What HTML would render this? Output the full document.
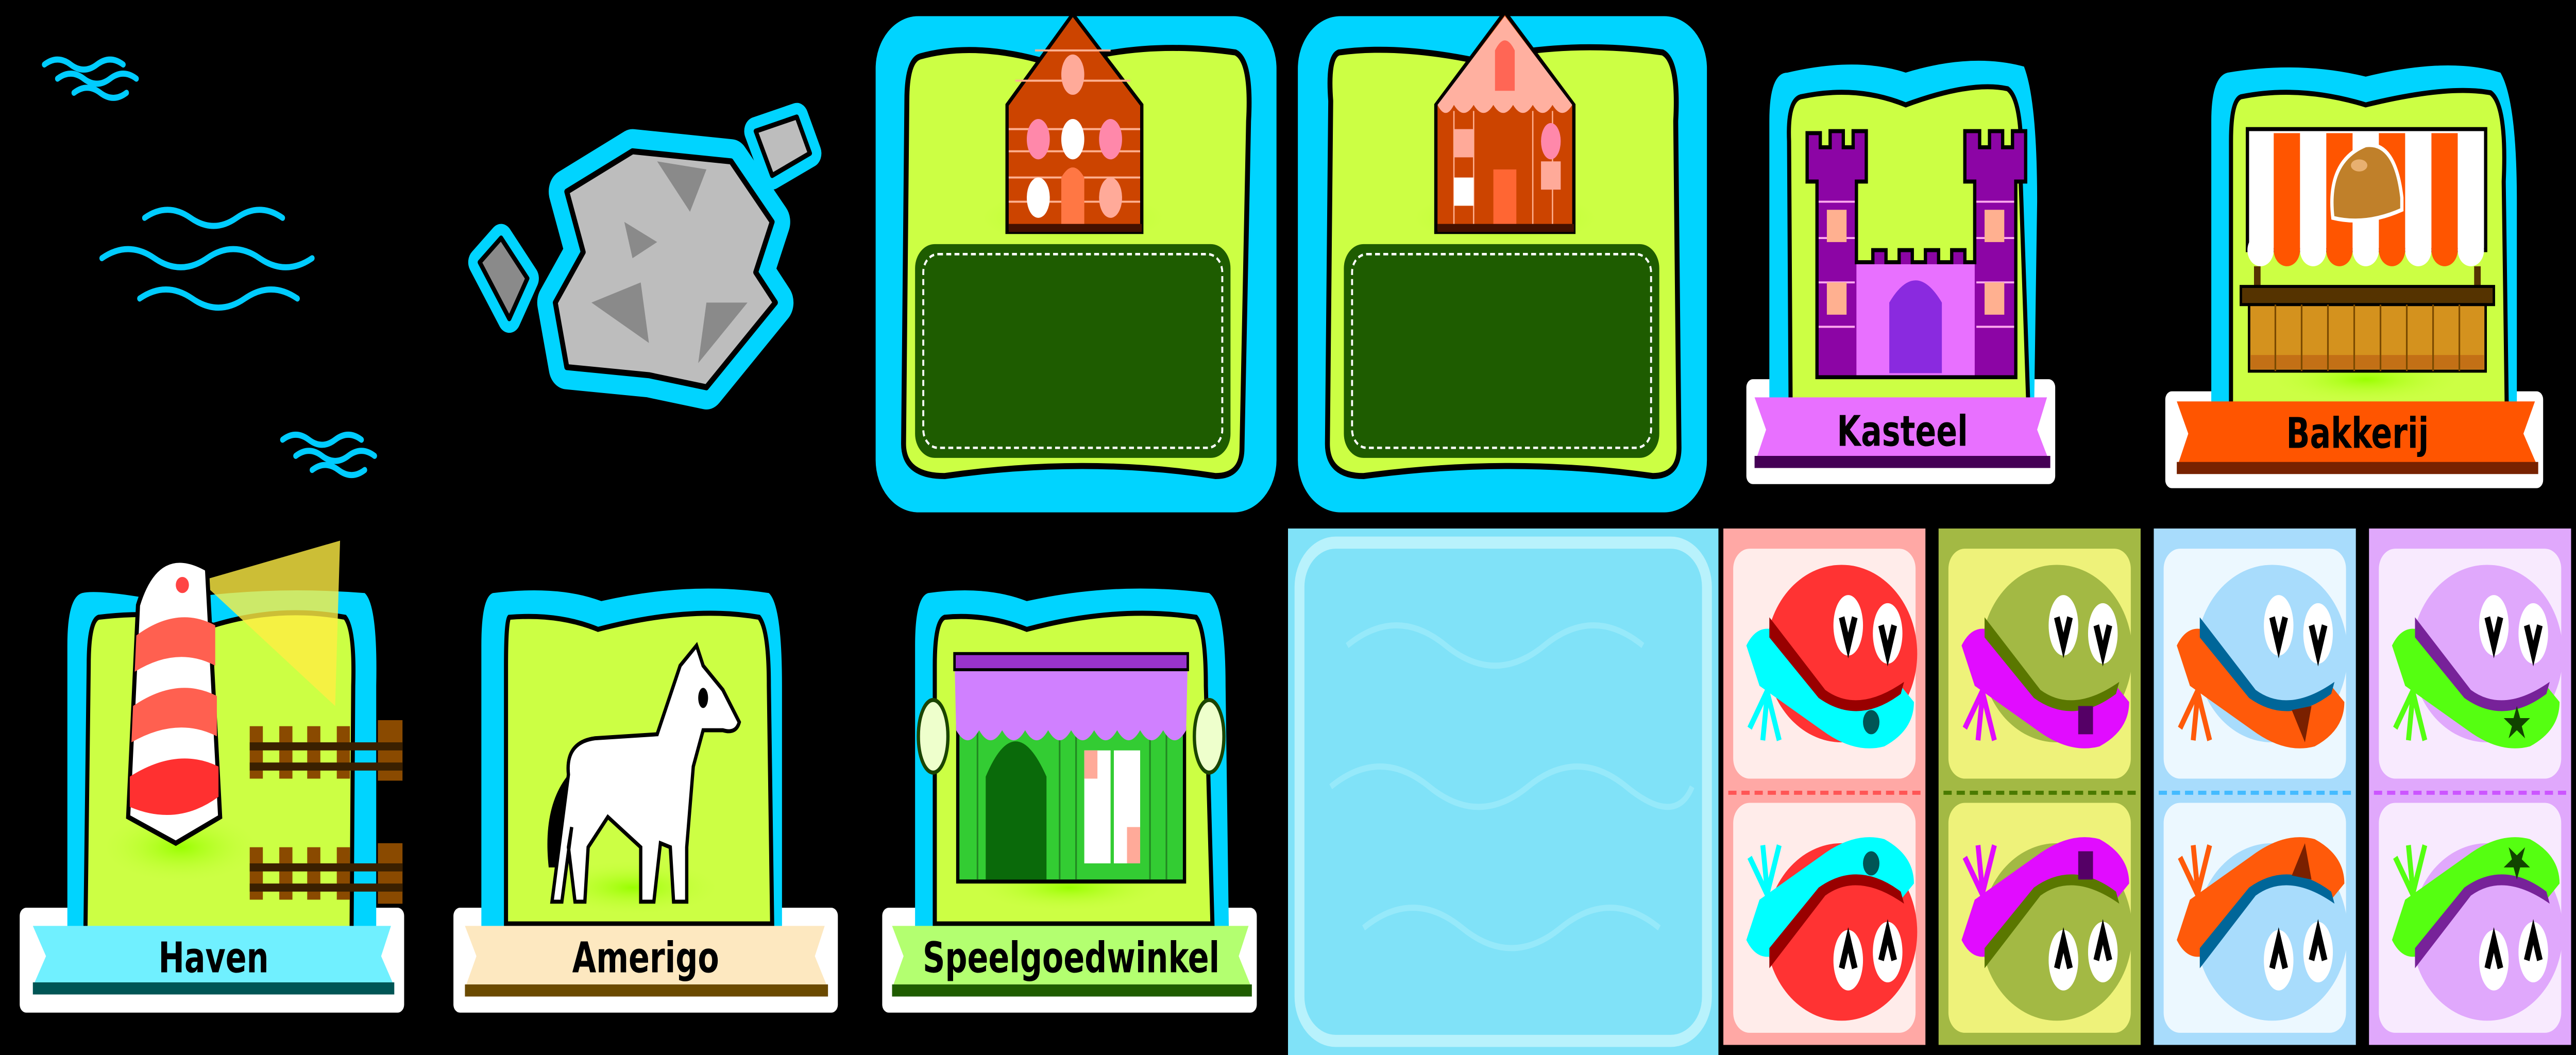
<!DOCTYPE html>
<html><head><meta charset="utf-8"><style>
html,body{margin:0;padding:0;background:#000;width:100vw;height:100vh;overflow:hidden;}
svg{display:block;width:100vw;height:100vh;}
text{font-family:"DejaVu Sans Condensed","DejaVu Sans","Liberation Sans",sans-serif;font-weight:bold;font-stretch:condensed;}
</style></head><body>
<svg viewBox="0 0 1568 523" preserveAspectRatio="none" xmlns="http://www.w3.org/2000/svg">
<rect width="1568" height="523" fill="#000"/>
<defs>
<radialGradient id="glow" cx="50%" cy="50%" r="50%"><stop offset="0" stop-color="#99ff00"/><stop offset="1" stop-color="#ccff44" stop-opacity="0"/></radialGradient>
</defs>

<g fill="none" stroke="#00ccff" stroke-width="3" stroke-linecap="round">
<path d="M27 32 q8-5 16 0 t16 0 t16 0"/><path d="M35 39 q8-5 16 0 t16 0 t16 0"/><path d="M45 46 q8-5 16 0 t16 0"/>
<path d="M62 128 q16-9 32 0 t32 0 t32 0 t32 0"/><path d="M88 108 q14-8 28 0 t28 0 t28 0"/><path d="M85 148 q16-9 32 0 t32 0 t32 0"/>
<path d="M172 218 q8-5 16 0 t16 0 t16 0"/><path d="M180 226 q8-5 16 0 t16 0 t16 0"/><path d="M190 233 q8-5 16 0 t16 0"/>
</g>

<g stroke-linejoin="round">
<path d="M345 95 L385 75 L445 80 L470 110 L460 135 L472 150 L430 192 L395 186 L345 182 L338 150 L355 125 Z" fill="#00d4ff" stroke="#00d4ff" stroke-width="22"/>
<path d="M460 65 L485 58 L493 76 L470 87 Z" fill="#00d4ff" stroke="#00d4ff" stroke-width="14"/>
<path d="M292 130 L305 118 L321 138 L310 158 Z" fill="#00d4ff" stroke="#00d4ff" stroke-width="14"/>
<path d="M345 95 L385 75 L445 80 L470 110 L460 135 L472 150 L430 192 L395 186 L345 182 L338 150 L355 125 Z" fill="#bdbdbd" stroke="#000" stroke-width="3"/>
<path d="M400 80 L430 84 L420 105 Z M360 150 L390 140 L395 170 Z M430 150 L455 150 L425 180 Z M380 110 L400 120 L385 128 Z" fill="#8a8a8a"/>
<path d="M460 65 L485 58 L493 76 L470 87 Z" fill="#bdbdbd" stroke="#000" stroke-width="2.5"/>
<path d="M292 130 L305 118 L321 138 L310 158 Z" fill="#8a8a8a" stroke="#000" stroke-width="2.5"/>
</g>

<rect x="533" y="8" width="244" height="246" rx="26" fill="#00d4ff"/>
<path d="M560 28 Q595 20 642 32 L655 30 Q700 20 752 26 Q762 30 760 60 L756 222 Q756 236 740 236 Q660 226 575 236 Q550 236 550 220 L552 50 Q552 30 560 28 Z" fill="#ccff44" stroke="#000" stroke-width="3"/>
<ellipse cx="653" cy="108" rx="60" ry="14" fill="url(#glow)"/>
<rect x="557" y="121" width="192" height="106" rx="12" fill="#1e5c00"/>
<rect x="562" y="126" width="182" height="96" rx="9" fill="none" stroke="#fff" stroke-width="1.2" stroke-dasharray="3 2"/>
<path d="M613 52 L653 7 L695 52 L695 115 L613 115 Z" fill="#cc4400" stroke="#000" stroke-width="2"/>
<g stroke="#ffb090" stroke-width="1"><line x1="630" y1="25" x2="676" y2="25"/><line x1="618" y1="40" x2="688" y2="40"/><line x1="614" y1="64" x2="694" y2="64"/><line x1="614" y1="75" x2="694" y2="75"/><line x1="614" y1="88" x2="694" y2="88"/><line x1="614" y1="100" x2="694" y2="100"/></g>
<g fill="#ff88aa"><ellipse cx="632" cy="69" rx="7" ry="10"/><ellipse cx="676" cy="69" rx="7" ry="10"/></g>
<ellipse cx="653" cy="69" rx="7" ry="10" fill="#fff"/><ellipse cx="632" cy="98" rx="7" ry="10" fill="#fff"/><ellipse cx="676" cy="98" rx="7" ry="10" fill="#ffaa99"/><ellipse cx="653" cy="37" rx="7" ry="10" fill="#ffaa99"/>
<path d="M646 113 L646 88 Q653 78 660 88 L660 113 Z" fill="#ff7744"/>
<rect x="614" y="111" width="81" height="4" fill="#441100"/>

<rect x="790" y="8" width="249" height="246" rx="26" fill="#00d4ff"/>
<path d="M815 26 Q850 22 898 30 L910 28 Q960 20 1012 26 Q1022 30 1020 60 L1022 222 Q1022 236 1006 236 Q920 226 830 236 Q808 236 808 220 L810 50 Q808 28 815 26 Z" fill="#ccff44" stroke="#000" stroke-width="3"/>
<ellipse cx="916" cy="108" rx="60" ry="14" fill="url(#glow)"/>
<rect x="818" y="121" width="192" height="106" rx="12" fill="#1e5c00"/>
<rect x="823" y="126" width="182" height="96" rx="9" fill="none" stroke="#fff" stroke-width="1.2" stroke-dasharray="3 2"/>
<path d="M874 52 L916 6 L958 52 L958 115 L874 115 Z" fill="#cc4400" stroke="#000" stroke-width="2"/>
<path d="M875 52 L916 8 L957 52 Q951 60 945 52 Q939 60 933 52 Q927 60 921 52 Q915 60 909 52 Q903 60 897 52 Q891 60 885 52 Q880 60 875 52 Z" fill="#ffb0a0"/>
<path d="M910 45 L910 25 Q916 15 922 25 L922 45 Z" fill="#ff6655"/>
<g stroke="#ffb090" stroke-width="0.8"><line x1="885" y1="55" x2="885" y2="112"/><line x1="897" y1="55" x2="897" y2="112"/><line x1="933" y1="55" x2="933" y2="112"/><line x1="945" y1="55" x2="945" y2="112"/></g>
<g fill="#ffaa99"><rect x="885" y="64" width="12" height="14"/><rect x="938" y="80" width="12" height="14"/><rect x="885" y="88" width="12" height="14" fill="#fff"/></g>
<ellipse cx="944" cy="70" rx="6" ry="9" fill="#ff88aa"/>
<rect x="909" y="84" width="14" height="28" fill="#ff6633"/>
<rect x="875" y="111" width="83" height="4" fill="#441100"/>

<rect x="1063" y="188" width="188" height="52" rx="4" fill="#fff"/>
<path d="M1088 36 Q1130 28 1160 36 Q1200 26 1232 33 Q1240 50 1240 100 L1238 212 L1077 212 L1077 60 Q1077 36 1088 36 Z" fill="#00d4ff"/>
<path d="M1096 48 Q1130 42 1160 52 Q1200 40 1222 44 Q1232 50 1230 90 L1235 210 L1090 210 L1089 70 Q1088 50 1096 48 Z" fill="#ccff44" stroke="#000" stroke-width="2.5"/>
<path d="M1100 66 L1108 66 L1108 73 L1114 73 L1114 65 L1122 65 L1122 73 L1128 73 L1128 65 L1136 65 L1136 90 L1130 90 L1130 130 L1140 130 L1140 124 L1148 124 L1148 130 L1156 130 L1156 124 L1164 124 L1164 130 L1172 130 L1172 124 L1180 124 L1180 130 L1188 130 L1188 124 L1196 124 L1196 130 L1202 130 L1202 90 L1196 90 L1196 65 L1205 65 L1205 73 L1211 73 L1211 65 L1219 65 L1219 73 L1225 73 L1225 65 L1233 65 L1233 90 L1227 90 L1227 187 L1106 187 L1106 90 L1100 90 Z" fill="#8c05a5" stroke="#000" stroke-width="2"/>
<rect x="1130" y="131" width="72" height="55" fill="#e870ff"/>
<path d="M1150 185 L1150 150 Q1166 128 1182 150 L1182 185 Z" fill="#8a2adf"/>
<g stroke="#ffaaee" stroke-width="1"><line x1="1107" y1="100" x2="1129" y2="100"/><line x1="1203" y1="100" x2="1226" y2="100"/><line x1="1107" y1="118" x2="1129" y2="118"/><line x1="1203" y1="118" x2="1226" y2="118"/><line x1="1107" y1="140" x2="1129" y2="140"/><line x1="1203" y1="140" x2="1226" y2="140"/><line x1="1107" y1="162" x2="1129" y2="162"/><line x1="1203" y1="162" x2="1226" y2="162"/></g>
<g fill="#ffb090"><rect x="1112" y="104" width="12" height="16"/><rect x="1208" y="104" width="12" height="16"/><rect x="1112" y="140" width="12" height="16"/><rect x="1208" y="140" width="12" height="16"/></g>
<path d="M1068 197 L1246 197 L1240 213 L1248 230 L1068 230 L1075 213 Z" fill="#e870ff"/>
<path d="M1068 226 L1248 226 L1248 232 L1068 232 Z" fill="#440055"/>
<text x="1158" y="221" font-size="21" text-anchor="middle" fill="#000">Kasteel</text>

<rect x="1318" y="194" width="230" height="48" rx="4" fill="#fff"/>
<path d="M1356 36 Q1400 30 1440 38 Q1490 28 1522 36 Q1532 50 1532 100 L1532 215 L1346 215 L1346 60 Q1346 38 1356 36 Z" fill="#00d4ff"/>
<path d="M1364 48 Q1400 42 1440 52 Q1490 42 1516 46 Q1526 52 1524 90 L1526 212 L1358 212 L1358 70 Q1358 50 1364 48 Z" fill="#ccff44" stroke="#000" stroke-width="2.5"/>
<ellipse cx="1440" cy="188" rx="60" ry="12" fill="url(#glow)"/>
<rect x="1368" y="64" width="145" height="60" fill="#fff" stroke="#000" stroke-width="2"/>
<g fill="#ff5500"><rect x="1384" y="66" width="16" height="58"/><rect x="1416" y="66" width="16" height="58"/><rect x="1448" y="66" width="16" height="58"/><rect x="1480" y="66" width="16" height="58"/><circle cx="1392" cy="124" r="8"/><circle cx="1424" cy="124" r="8"/><circle cx="1456" cy="124" r="8"/><circle cx="1488" cy="124" r="8"/></g>
<g fill="#fff"><circle cx="1376" cy="124" r="8"/><circle cx="1408" cy="124" r="8"/><circle cx="1440" cy="124" r="8"/><circle cx="1472" cy="124" r="8"/><circle cx="1504" cy="124" r="8"/></g>
<path d="M1420 108 Q1416 80 1440 72 Q1458 70 1462 98 L1462 104 Q1440 112 1420 108 Z" fill="#c0802a" stroke="#fff" stroke-width="2"/>
<ellipse cx="1436" cy="82" rx="5" ry="3" fill="#e8b070"/>
<rect x="1372" y="132" width="4" height="12" fill="#553300"/><rect x="1506" y="132" width="4" height="12" fill="#553300"/>
<rect x="1364" y="142" width="154" height="9" fill="#553300" stroke="#000" stroke-width="1.5"/>
<rect x="1369" y="151" width="144" height="33" fill="#d4921e" stroke="#000" stroke-width="1.5"/>
<rect x="1370" y="176" width="142" height="7" fill="#b85a10" opacity="0.6"/>
<g stroke="#7a4a00" stroke-width="1"><line x1="1385" y1="151" x2="1385" y2="184"/><line x1="1401" y1="151" x2="1401" y2="184"/><line x1="1417" y1="151" x2="1417" y2="184"/><line x1="1433" y1="151" x2="1433" y2="184"/><line x1="1449" y1="151" x2="1449" y2="184"/><line x1="1465" y1="151" x2="1465" y2="184"/><line x1="1481" y1="151" x2="1481" y2="184"/><line x1="1497" y1="151" x2="1497" y2="184"/></g>
<path d="M1325 199 L1543 199 L1536 215 L1545 232 L1325 232 L1332 215 Z" fill="#ff5500"/>
<path d="M1325 229 L1545 229 L1545 235 L1325 235 Z" fill="#772200"/>
<text x="1435" y="222" font-size="21" text-anchor="middle" fill="#000">Bakkerij</text>

<rect x="12" y="450" width="234" height="52" rx="4" fill="#fff"/>
<path d="M50 294 Q60 292 100 298 Q160 290 222 294 Q230 300 229 340 L229 462 L41 462 L41 320 Q41 296 50 294 Z" fill="#00d4ff"/>
<path d="M60 306 Q100 302 130 310 Q170 300 210 306 Q216 312 215 340 L214 462 L52 462 L54 330 Q54 308 60 306 Z" fill="#ccff44" stroke="#000" stroke-width="2.5"/>
<ellipse cx="110" cy="420" rx="50" ry="18" fill="url(#glow)"/>
<path d="M122 288 L207 268 L204 350 Z" fill="#ffee44" opacity="0.8"/>
<path d="M78 405 L84 300 Q96 268 126 282 L134 405 L107 418 Z" fill="#fff" stroke="#000" stroke-width="2.5"/>
<g fill="#ff6050"><path d="M83 315 Q108 300 131 310 L131 330 Q108 320 82 333 Z"/><path d="M81 350 Q108 335 132 345 L132 365 Q108 355 80 368 Z"/><path d="M79 385 Q108 370 133 380 L133 395 Q108 410 79 400 Z" fill="#ff3030"/></g>
<circle cx="111" cy="290" r="4" fill="#ff4444"/>
<g fill="#8a4a00"><rect x="152" y="360" width="8" height="26"/><rect x="170" y="360" width="8" height="26"/><rect x="187" y="360" width="8" height="26"/><rect x="205" y="360" width="8" height="26"/><rect x="230" y="357" width="15" height="30"/><rect x="152" y="420" width="8" height="26"/><rect x="170" y="420" width="8" height="26"/><rect x="187" y="420" width="8" height="26"/><rect x="205" y="420" width="8" height="26"/><rect x="230" y="418" width="15" height="30"/></g>
<g fill="#3a2000"><rect x="152" y="368" width="93" height="4"/><rect x="152" y="378" width="93" height="4"/><rect x="152" y="428" width="93" height="4"/><rect x="152" y="438" width="93" height="4"/></g>
<path d="M20 459 L238 459 L232 474 L240 489 L20 489 L28 474 Z" fill="#70f0ff"/>
<path d="M20 487 L240 487 L240 493 L20 493 Z" fill="#005555"/>
<text x="130" y="482" font-size="21" text-anchor="middle" fill="#000">Haven</text>

<rect x="276" y="450" width="234" height="52" rx="4" fill="#fff"/>
<path d="M300 294 Q340 290 366 298 Q420 288 468 294 Q476 300 476 340 L476 462 L293 462 L293 320 Q293 296 300 294 Z" fill="#00d4ff"/>
<path d="M310 306 Q340 304 364 312 Q420 300 462 306 Q468 312 468 340 L470 458 L308 458 L308 330 Q308 308 310 306 Z" fill="#ccff44" stroke="#000" stroke-width="2.5"/>
<ellipse cx="385" cy="440" rx="55" ry="14" fill="url(#glow)"/>
<path d="M346 384 Q344 368 362 366 L400 364 L414 330 L424 320 L428 330 L440 342 L450 358 Q448 364 440 362 L428 362 L422 380 L418 420 L418 447 L410 447 L408 420 L402 418 L398 447 L390 447 L390 420 L370 405 L358 420 L356 447 L350 447 L346 420 L348 410 L342 447 L336 447 Z" fill="#fff" stroke="#000" stroke-width="2"/>
<path d="M346 384 Q330 400 334 430 L338 430 Z" fill="#000"/>
<ellipse cx="428" cy="346" rx="3" ry="5" fill="#000"/>
<path d="M283 459 L502 459 L496 474 L504 490 L283 490 L290 474 Z" fill="#fde8c0"/>
<path d="M283 488 L504 488 L504 494 L283 494 Z" fill="#6b4a00"/>
<text x="393" y="482" font-size="21" text-anchor="middle" fill="#000">Amerigo</text>

<rect x="537" y="450" width="228" height="52" rx="4" fill="#fff"/>
<path d="M565 294 Q600 290 625 298 Q680 288 736 294 Q746 300 746 340 L748 462 L557 462 L557 320 Q557 296 565 294 Z" fill="#00d4ff"/>
<path d="M575 306 Q600 304 625 312 Q680 300 728 306 Q734 312 734 340 L738 458 L569 458 L569 330 Q569 308 575 306 Z" fill="#ccff44" stroke="#000" stroke-width="2.5"/>
<ellipse cx="651" cy="440" rx="60" ry="12" fill="url(#glow)"/>
<ellipse cx="568" cy="365" rx="9" ry="18" fill="#eeffcc" stroke="#1a4400" stroke-width="2"/>
<ellipse cx="736" cy="365" rx="9" ry="18" fill="#eeffcc" stroke="#1a4400" stroke-width="2"/>
<rect x="583" y="360" width="138" height="77" fill="#33cc33" stroke="#000" stroke-width="2"/>
<g stroke="#228822" stroke-width="1"><line x1="595" y1="362" x2="595" y2="436"/><line x1="645" y1="362" x2="645" y2="436"/><line x1="655" y1="362" x2="655" y2="436"/><line x1="700" y1="362" x2="700" y2="436"/><line x1="710" y1="362" x2="710" y2="436"/></g>
<path d="M600 436 L600 385 Q618 350 637 385 L637 436 Z" fill="#0a6a0a"/>
<g fill="#fff"><rect x="660" y="372" width="16" height="56"/><rect x="678" y="372" width="16" height="56"/></g>
<g fill="#ffaa99"><rect x="660" y="372" width="8" height="14"/><rect x="686" y="410" width="8" height="18"/></g>
<path d="M581 326 L723 326 L722 362 Q715 372 708 362 Q701 372 694 362 Q687 372 680 362 Q673 372 666 362 Q659 372 652 362 Q645 372 638 362 Q631 372 624 362 Q617 372 610 362 Q603 372 596 362 Q589 372 582 362 Z" fill="#d080ff"/>
<rect x="581" y="324" width="142" height="8" fill="#9933cc" stroke="#000" stroke-width="1.5"/>
<path d="M543 459 L760 459 L754 474 L762 490 L543 490 L550 474 Z" fill="#b3ff70"/>
<path d="M543 488 L762 488 L762 494 L543 494 Z" fill="#1f5c00"/>
<text x="652" y="482" font-size="21" text-anchor="middle" fill="#000">Speelgoedwinkel</text>

<rect x="784" y="262" width="262" height="261" fill="#80e2f8"/>
<rect x="791" y="269" width="248" height="247" rx="22" fill="none" stroke="#b8f2fc" stroke-width="6"/>
<g fill="none" stroke="#a0ecfb" stroke-width="3" opacity="0.7">
<path d="M820 320 q30-20 60 0 t60 0 t60 0"/><path d="M810 390 q30-20 60 0 t60 0 t60 0 t40 0"/><path d="M830 460 q30-20 60 0 t60 0 t60 0"/>
</g>

<g transform="translate(1049,262)">
<rect x="0" y="0" width="123" height="256" fill="#ffa8a5"/>
<rect x="6" y="10" width="111" height="114" rx="10" fill="#ffecea"/>
<rect x="6" y="136" width="111" height="114" rx="10" fill="#ffecea"/>
<line x1="3" y1="131" x2="122" y2="131" stroke="#ff5555" stroke-width="2" stroke-dasharray="5 3"/>
<g><ellipse cx="72" cy="62" rx="46" ry="44" fill="#ff3333"/>
<path d="M14 58 Q20 48 30 50 L60 82 Q80 96 108 78 L116 86 Q116 100 98 108 Q80 112 60 100 L22 78 Z" fill="#00ffff"/>
<path d="M28 44 L62 80 Q82 92 110 76 L108 82 Q82 98 58 84 L28 54 Z" fill="#990000"/>
<ellipse cx="90" cy="96" rx="5" ry="6" fill="#005555"/>
<path d="M27 80 L16 99 M27 80 L24 105 M27 82 L34 105" stroke="#00ffff" stroke-width="3" fill="none"/>
<ellipse cx="76" cy="48" rx="9" ry="15" fill="#fff"/><ellipse cx="100" cy="52" rx="9" ry="15" fill="#fff"/>
<path d="M72 44 L76 58 L80 44" stroke="#000" stroke-width="3.5" fill="none"/><path d="M96 48 L100 62 L104 48" stroke="#000" stroke-width="3.5" fill="none"/></g>
<g transform="translate(0,262) scale(1,-1)"><ellipse cx="72" cy="62" rx="46" ry="44" fill="#ff3333"/>
<path d="M14 58 Q20 48 30 50 L60 82 Q80 96 108 78 L116 86 Q116 100 98 108 Q80 112 60 100 L22 78 Z" fill="#00ffff"/>
<path d="M28 44 L62 80 Q82 92 110 76 L108 82 Q82 98 58 84 L28 54 Z" fill="#990000"/>
<ellipse cx="90" cy="96" rx="5" ry="6" fill="#005555"/>
<path d="M27 80 L16 99 M27 80 L24 105 M27 82 L34 105" stroke="#00ffff" stroke-width="3" fill="none"/>
<ellipse cx="76" cy="48" rx="9" ry="15" fill="#fff"/><ellipse cx="100" cy="52" rx="9" ry="15" fill="#fff"/>
<path d="M72 44 L76 58 L80 44" stroke="#000" stroke-width="3.5" fill="none"/><path d="M96 48 L100 62 L104 48" stroke="#000" stroke-width="3.5" fill="none"/></g>
</g>

<g transform="translate(1180,262)">
<rect x="0" y="0" width="123" height="256" fill="#a3b944"/>
<rect x="6" y="10" width="111" height="114" rx="10" fill="#eef27a"/>
<rect x="6" y="136" width="111" height="114" rx="10" fill="#eef27a"/>
<line x1="3" y1="131" x2="122" y2="131" stroke="#4a7a00" stroke-width="2" stroke-dasharray="5 3"/>
<g><ellipse cx="72" cy="62" rx="46" ry="44" fill="#a3b944"/>
<path d="M14 58 Q20 48 30 50 L60 82 Q80 96 108 78 L116 86 Q116 100 98 108 Q80 112 60 100 L22 78 Z" fill="#e10cff"/>
<path d="M28 44 L62 80 Q82 92 110 76 L108 82 Q82 98 58 84 L28 54 Z" fill="#5a7700"/>
<rect x="85" y="88" width="9" height="14" fill="#550066"/>
<path d="M27 80 L16 99 M27 80 L24 105 M27 82 L34 105" stroke="#e10cff" stroke-width="3" fill="none"/>
<ellipse cx="76" cy="48" rx="9" ry="15" fill="#fff"/><ellipse cx="100" cy="52" rx="9" ry="15" fill="#fff"/>
<path d="M72 44 L76 58 L80 44" stroke="#000" stroke-width="3.5" fill="none"/><path d="M96 48 L100 62 L104 48" stroke="#000" stroke-width="3.5" fill="none"/></g>
<g transform="translate(0,262) scale(1,-1)"><ellipse cx="72" cy="62" rx="46" ry="44" fill="#a3b944"/>
<path d="M14 58 Q20 48 30 50 L60 82 Q80 96 108 78 L116 86 Q116 100 98 108 Q80 112 60 100 L22 78 Z" fill="#e10cff"/>
<path d="M28 44 L62 80 Q82 92 110 76 L108 82 Q82 98 58 84 L28 54 Z" fill="#5a7700"/>
<rect x="85" y="88" width="9" height="14" fill="#550066"/>
<path d="M27 80 L16 99 M27 80 L24 105 M27 82 L34 105" stroke="#e10cff" stroke-width="3" fill="none"/>
<ellipse cx="76" cy="48" rx="9" ry="15" fill="#fff"/><ellipse cx="100" cy="52" rx="9" ry="15" fill="#fff"/>
<path d="M72 44 L76 58 L80 44" stroke="#000" stroke-width="3.5" fill="none"/><path d="M96 48 L100 62 L104 48" stroke="#000" stroke-width="3.5" fill="none"/></g>
</g>

<g transform="translate(1311,262)">
<rect x="0" y="0" width="123" height="256" fill="#a8dcfc"/>
<rect x="6" y="10" width="111" height="114" rx="10" fill="#ecf8ff"/>
<rect x="6" y="136" width="111" height="114" rx="10" fill="#ecf8ff"/>
<line x1="3" y1="131" x2="122" y2="131" stroke="#44bbff" stroke-width="2" stroke-dasharray="5 3"/>
<g><ellipse cx="72" cy="62" rx="46" ry="44" fill="#a8dcfc"/>
<path d="M14 58 Q20 48 30 50 L60 82 Q80 96 108 78 L116 86 Q116 100 98 108 Q80 112 60 100 L22 78 Z" fill="#ff5a0a"/>
<path d="M28 44 L62 80 Q82 92 110 76 L108 82 Q82 98 58 84 L28 54 Z" fill="#006699"/>
<path d="M84 90 L96 88 L92 106 Z" fill="#7a2000"/>
<path d="M27 80 L16 99 M27 80 L24 105 M27 82 L34 105" stroke="#ff5a0a" stroke-width="3" fill="none"/>
<ellipse cx="76" cy="48" rx="9" ry="15" fill="#fff"/><ellipse cx="100" cy="52" rx="9" ry="15" fill="#fff"/>
<path d="M72 44 L76 58 L80 44" stroke="#000" stroke-width="3.5" fill="none"/><path d="M96 48 L100 62 L104 48" stroke="#000" stroke-width="3.5" fill="none"/></g>
<g transform="translate(0,262) scale(1,-1)"><ellipse cx="72" cy="62" rx="46" ry="44" fill="#a8dcfc"/>
<path d="M14 58 Q20 48 30 50 L60 82 Q80 96 108 78 L116 86 Q116 100 98 108 Q80 112 60 100 L22 78 Z" fill="#ff5a0a"/>
<path d="M28 44 L62 80 Q82 92 110 76 L108 82 Q82 98 58 84 L28 54 Z" fill="#006699"/>
<path d="M84 90 L96 88 L92 106 Z" fill="#7a2000"/>
<path d="M27 80 L16 99 M27 80 L24 105 M27 82 L34 105" stroke="#ff5a0a" stroke-width="3" fill="none"/>
<ellipse cx="76" cy="48" rx="9" ry="15" fill="#fff"/><ellipse cx="100" cy="52" rx="9" ry="15" fill="#fff"/>
<path d="M72 44 L76 58 L80 44" stroke="#000" stroke-width="3.5" fill="none"/><path d="M96 48 L100 62 L104 48" stroke="#000" stroke-width="3.5" fill="none"/></g>
</g>

<g transform="translate(1442,262)">
<rect x="0" y="0" width="123" height="256" fill="#e0a8fc"/>
<rect x="6" y="10" width="111" height="114" rx="10" fill="#f8eafe"/>
<rect x="6" y="136" width="111" height="114" rx="10" fill="#f8eafe"/>
<line x1="3" y1="131" x2="122" y2="131" stroke="#cc55ff" stroke-width="2" stroke-dasharray="5 3"/>
<g><ellipse cx="72" cy="62" rx="46" ry="44" fill="#e0a8fc"/>
<path d="M14 58 Q20 48 30 50 L60 82 Q80 96 108 78 L116 86 Q116 100 98 108 Q80 112 60 100 L22 78 Z" fill="#55ff11"/>
<path d="M28 44 L62 80 Q82 92 110 76 L108 82 Q82 98 58 84 L28 54 Z" fill="#772299"/>
<path d="M90 88 L92 94 L98 94 L93 98 L95 104 L90 100 L85 104 L87 98 L82 94 L88 94 Z" fill="#114400"/>
<path d="M27 80 L16 99 M27 80 L24 105 M27 82 L34 105" stroke="#55ff11" stroke-width="3" fill="none"/>
<ellipse cx="76" cy="48" rx="9" ry="15" fill="#fff"/><ellipse cx="100" cy="52" rx="9" ry="15" fill="#fff"/>
<path d="M72 44 L76 58 L80 44" stroke="#000" stroke-width="3.5" fill="none"/><path d="M96 48 L100 62 L104 48" stroke="#000" stroke-width="3.5" fill="none"/></g>
<g transform="translate(0,262) scale(1,-1)"><ellipse cx="72" cy="62" rx="46" ry="44" fill="#e0a8fc"/>
<path d="M14 58 Q20 48 30 50 L60 82 Q80 96 108 78 L116 86 Q116 100 98 108 Q80 112 60 100 L22 78 Z" fill="#55ff11"/>
<path d="M28 44 L62 80 Q82 92 110 76 L108 82 Q82 98 58 84 L28 54 Z" fill="#772299"/>
<path d="M90 88 L92 94 L98 94 L93 98 L95 104 L90 100 L85 104 L87 98 L82 94 L88 94 Z" fill="#114400"/>
<path d="M27 80 L16 99 M27 80 L24 105 M27 82 L34 105" stroke="#55ff11" stroke-width="3" fill="none"/>
<ellipse cx="76" cy="48" rx="9" ry="15" fill="#fff"/><ellipse cx="100" cy="52" rx="9" ry="15" fill="#fff"/>
<path d="M72 44 L76 58 L80 44" stroke="#000" stroke-width="3.5" fill="none"/><path d="M96 48 L100 62 L104 48" stroke="#000" stroke-width="3.5" fill="none"/></g>
</g>
</svg>
</body></html>
